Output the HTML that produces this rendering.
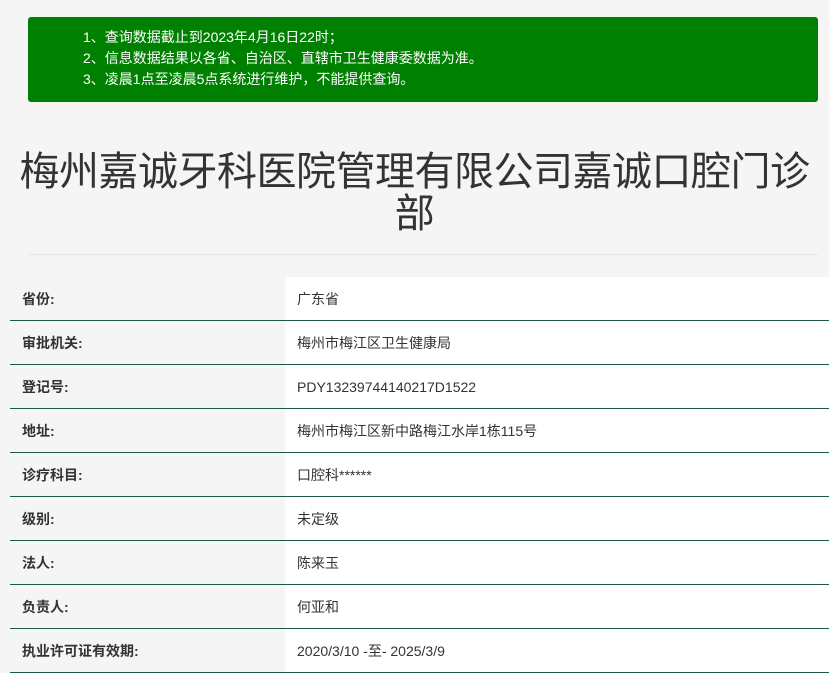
<!DOCTYPE html>
<html><head><meta charset="utf-8"><style>
body{margin:0;background:#f5f5f5;font-family:"Liberation Sans","Noto Sans CJK SC",sans-serif;width:829px;height:667px;overflow:hidden;position:relative}
.note{position:absolute;left:28px;top:17px;width:790px;height:85px;background:#008000;border-radius:3px;color:#fff;font-size:14px;line-height:21px;box-sizing:border-box;padding:10px 0 0 55px}
h1{position:absolute;left:0;top:151px;width:829px;margin:0;text-align:center;font-weight:normal;font-size:40px;line-height:42px;color:#333;letter-spacing:-0.5px}
.hr{position:absolute;left:28px;top:254px;width:790px;height:1px;background:#e6e6e6}
table{position:absolute;left:10px;top:277px;border-collapse:collapse;width:819px}
td{height:43px;border-bottom:1px solid #1f5c3c;padding:0;font-size:14px;color:#333}
td.l{width:263px;padding-left:12px;font-weight:bold;font-size:14px;background:#f5f5f5}
td.v{background:#fff;padding-left:12px}
</style></head><body>
<div class="note">1、查询数据截止到2023年4月16日22时；<br>2、信息数据结果以各省、自治区、直辖市卫生健康委数据为准。<br>3、凌晨1点至凌晨5点系统进行维护，不能提供查询。</div>
<h1>梅州嘉诚牙科医院管理有限公司嘉诚口腔门诊<br>部</h1>
<div class="hr"></div>
<table>
<tr><td class="l">省份:</td><td class="v">广东省</td></tr>
<tr><td class="l">审批机关:</td><td class="v">梅州市梅江区卫生健康局</td></tr>
<tr><td class="l">登记号:</td><td class="v">PDY13239744140217D1522</td></tr>
<tr><td class="l">地址:</td><td class="v">梅州市梅江区新中路梅江水岸1栋115号</td></tr>
<tr><td class="l">诊疗科目:</td><td class="v">口腔科******</td></tr>
<tr><td class="l">级别:</td><td class="v">未定级</td></tr>
<tr><td class="l">法人:</td><td class="v">陈来玉</td></tr>
<tr><td class="l">负责人:</td><td class="v">何亚和</td></tr>
<tr><td class="l">执业许可证有效期:</td><td class="v">2020/3/10 -至- 2025/3/9</td></tr>
</table>
</body></html>
